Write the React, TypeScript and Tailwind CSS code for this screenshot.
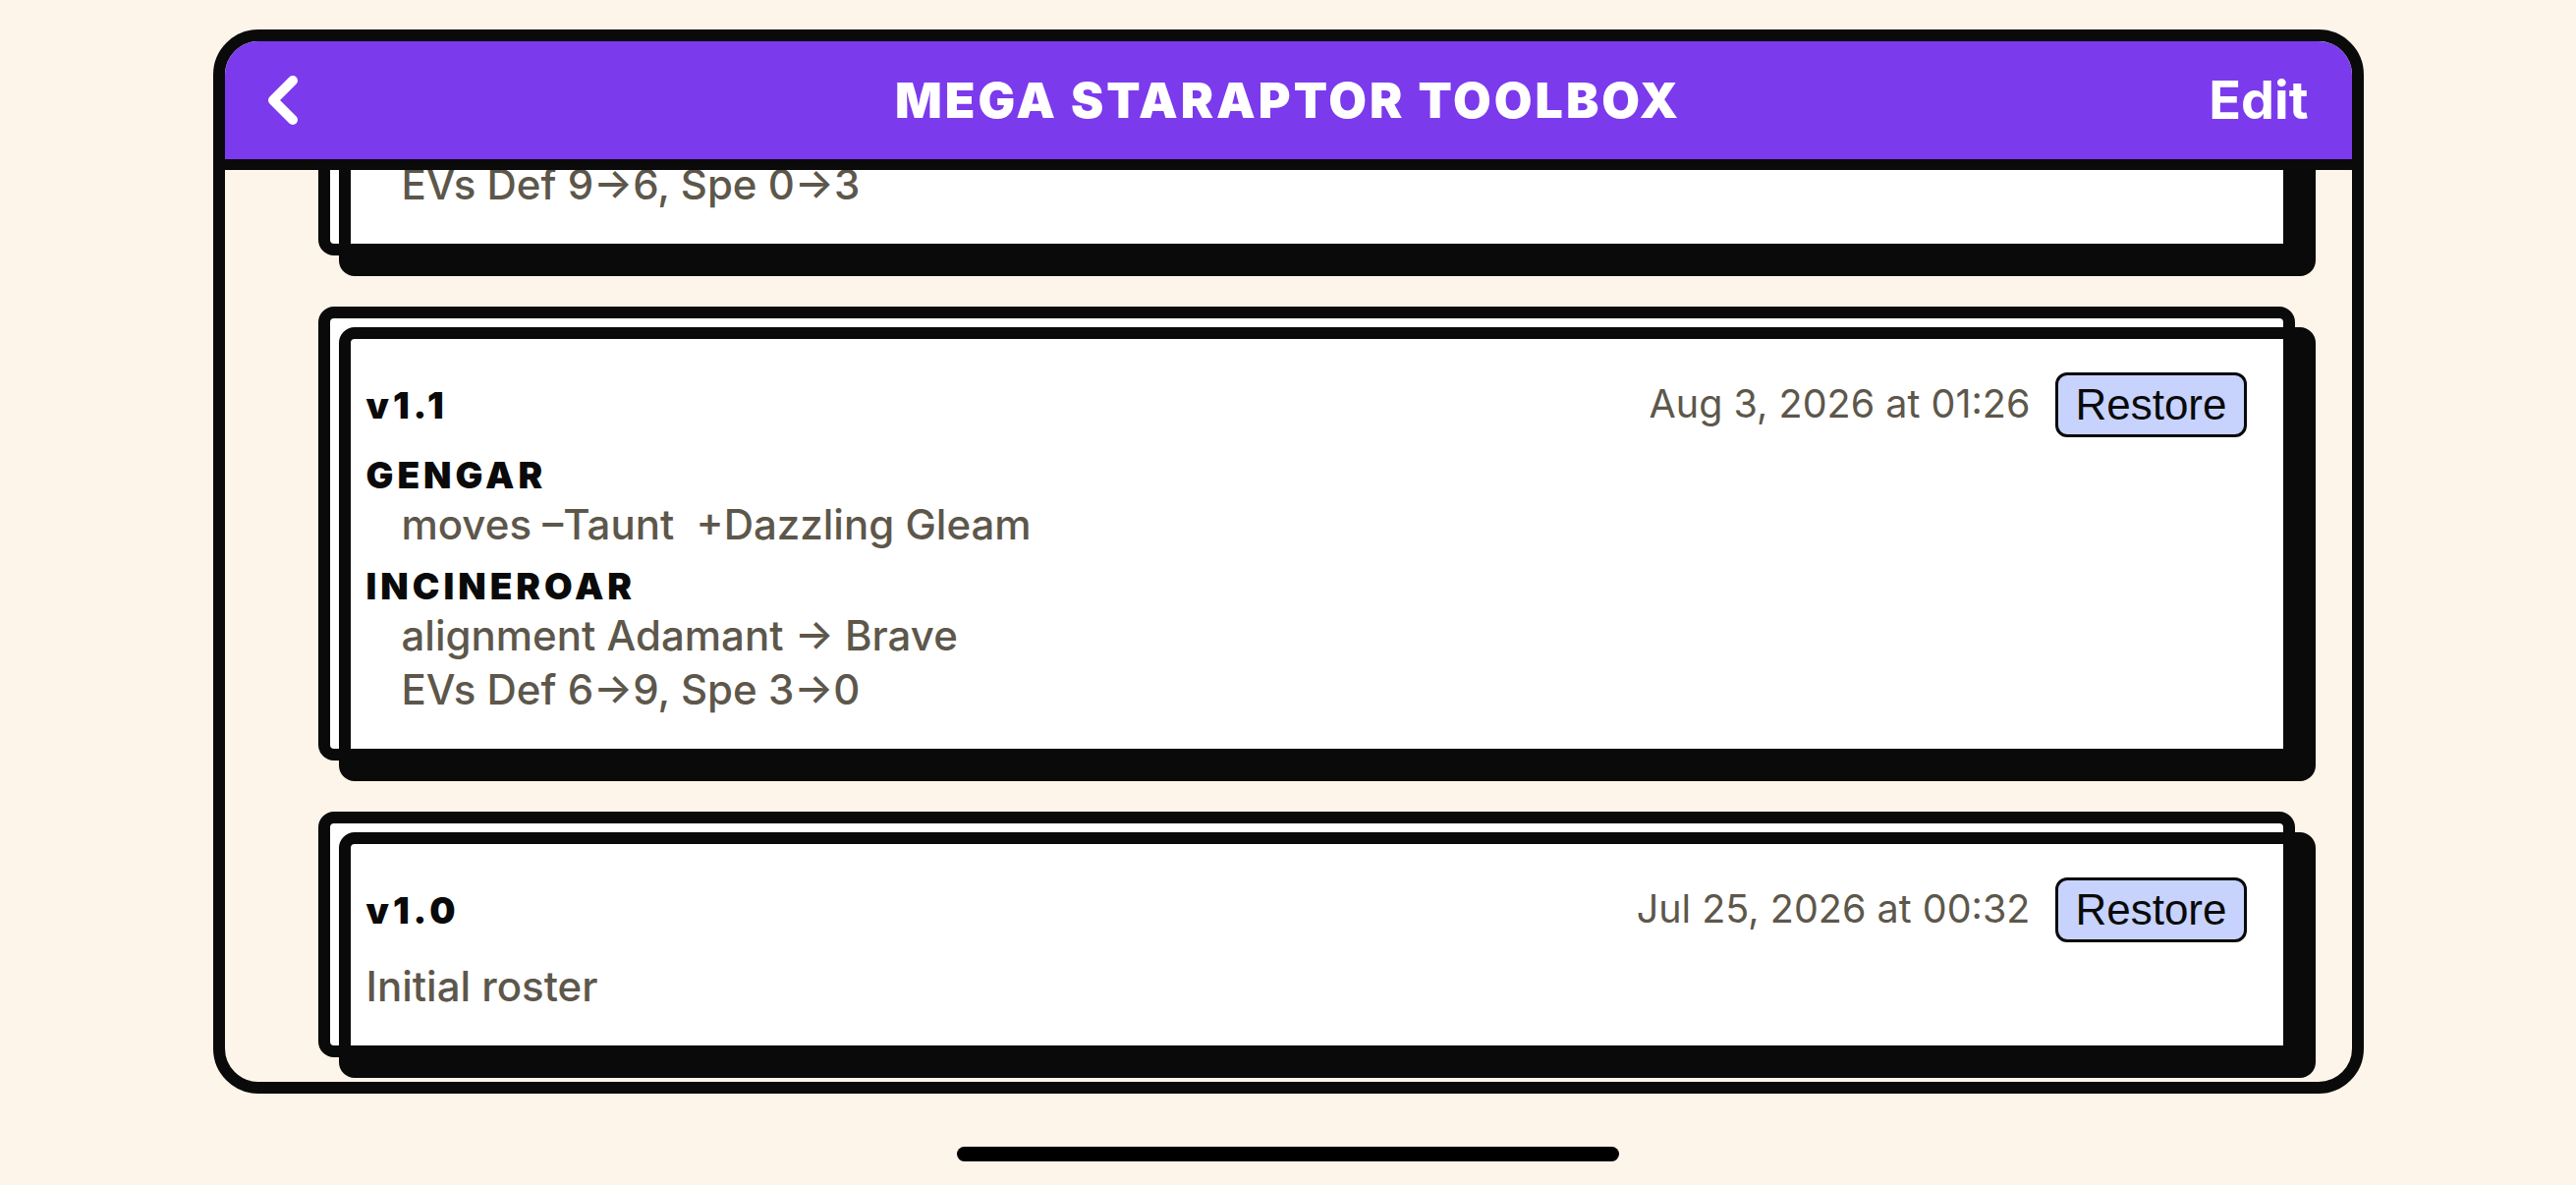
import React from "react";

const sans = { fontFamily: "Inter, 'Noto Sans', sans-serif" };

type Group = { name: string; lines: string[] };
type Version = { v: string; date: string; groups?: Group[]; note?: string };

const versions: Version[] = [
  {
    v: "v1.2",
    date: "Aug 9, 2026 at 18:04",
    groups: [
      { name: "GENGAR", lines: ["moves –Dazzling Gleam  +Taunt"] },
      { name: "INCINEROAR", lines: ["alignment Brave → Adamant", "EVs Def 9→6, Spe 0→3"] },
    ],
  },
  {
    v: "v1.1",
    date: "Aug 3, 2026 at 01:26",
    groups: [
      { name: "GENGAR", lines: ["moves –Taunt  +Dazzling Gleam"] },
      { name: "INCINEROAR", lines: ["alignment Adamant → Brave", "EVs Def 6→9, Spe 3→0"] },
    ],
  },
  { v: "v1.0", date: "Jul 25, 2026 at 00:32", note: "Initial roster" },
];

function Card({ data }: { data: Version }) {
  return (
    <div className="shrink-0 rounded-[16px] border-[12px] border-[#0a0a0a] bg-white pl-[9px] pt-[9px]">
      <div className="-mb-[33px] -mr-[33px] rounded-[16px] border-b-[33px] border-l-[12px] border-r-[33px] border-t-[12px] border-[#0a0a0a] bg-white pb-[33px] pl-[16px] pr-[37px] pt-[34px]">
        <div className="mb-[17px] flex h-[66px] items-center justify-between">
          <div className="text-[37px] font-black leading-none tracking-[4px] text-[#0a0a0a]" style={sans}>
            {data.v}
          </div>
          <div className="flex items-center gap-[26px]">
            <div className="text-[39.5px] leading-none text-[#5d574b]" style={sans}>
              {data.date}
            </div>
            <div
              className="flex h-[66px] items-center rounded-[12px] border-[3px] border-[#0a0a0a] bg-[#c7d3fd] px-[17px] text-[44px] leading-none text-[#0a0a0a]"
              style={{ fontFamily: "'Liberation Sans', Arial, sans-serif" }}
            >
              Restore
            </div>
          </div>
        </div>
        {data.groups && (
          <div className="flex flex-col gap-[14px]">
            {data.groups.map((g) => (
              <div key={g.name} className="flex flex-col">
                <div className="text-[37px] font-black leading-[44px] tracking-[4px] text-[#0a0a0a]" style={sans}>
                  {g.name}
                </div>
                {g.lines.map((l) => (
                  <div
                    key={l}
                    className="whitespace-pre pl-[36px] text-[42px] font-medium leading-[55px] text-[#5d574b]"
                    style={sans}
                  >
                    {l}
                  </div>
                ))}
              </div>
            ))}
          </div>
        )}
        {data.note && (
          <div className="text-[42px] font-medium leading-[55px] text-[#5d574b]" style={sans}>
            {data.note}
          </div>
        )}
      </div>
    </div>
  );
}

export default function App() {
  return (
    <div className="flex h-[1206px] w-full flex-col items-center bg-[#fdf5e9]">
      <div className="mt-[30px] flex h-[1083px] w-[2189px] flex-col overflow-hidden rounded-[46px] border-[12px] border-[#0a0a0a] bg-[#fdf5e9]">
        <div className="grid h-[131px] shrink-0 grid-cols-[1fr_auto_1fr] items-center border-b-[11px] border-[#0a0a0a] bg-[#7c3aed] px-[44px]">
          <div className="flex items-center">
            <svg width="30" height="50" viewBox="0 0 30 50" fill="none">
              <polyline points="25,5 5,25 25,45" stroke="white" strokeWidth="10" strokeLinecap="round" strokeLinejoin="round" />
            </svg>
          </div>
          <div className="text-[50px] font-black leading-none tracking-[3px] text-white" style={sans}>
            MEGA STARAPTOR TOOLBOX
          </div>
          <div className="flex justify-end">
            <span className="text-[54px] font-bold leading-none text-white" style={sans}>
              Edit
            </span>
          </div>
        </div>
        <div className="flex min-h-0 flex-1 flex-col justify-end gap-[52px] overflow-hidden pb-[25px] pl-[95px] pr-[58px]">
          {versions.map((v) => (
            <Card key={v.v} data={v} />
          ))}
        </div>
      </div>
      <div className="mt-[54px] h-[15px] w-[674px] rounded-full bg-black" />
    </div>
  );
}
